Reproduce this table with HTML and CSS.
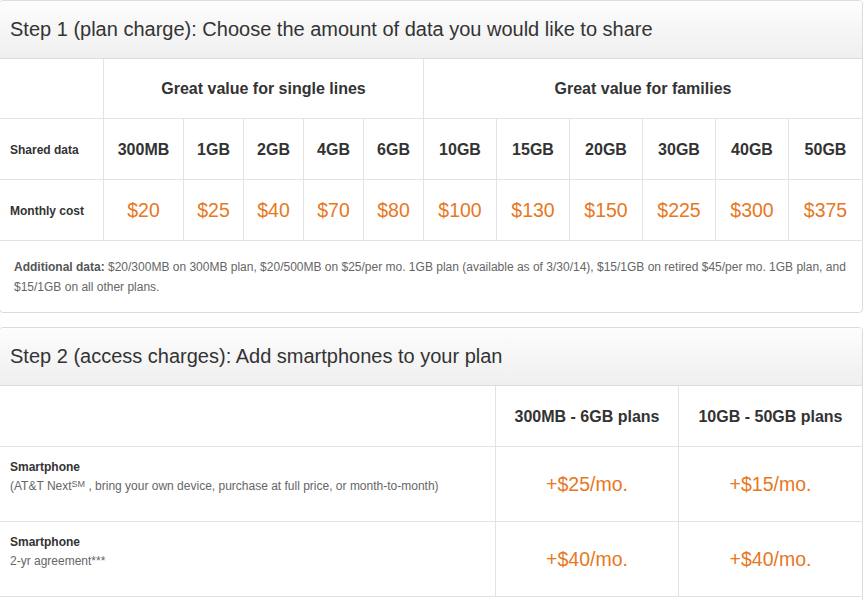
FILE: index.html
```html
<!DOCTYPE html>
<html>
<head>
<meta charset="utf-8">
<link rel="stylesheet" href="styles.css">
</head>
<body>
<div class="page">
  <section class="panel">
    <h2 class="panel-title">Step 1 (plan charge): Choose the amount of data you would like to share</h2>
    <div class="grid plans">
      <div class="cell"></div>
      <div class="cell group single">Great value for single lines</div>
      <div class="cell group family">Great value for families</div>

      <div class="cell label">Shared data</div>
      <div class="cell size">300MB</div>
      <div class="cell size">1GB</div>
      <div class="cell size">2GB</div>
      <div class="cell size">4GB</div>
      <div class="cell size">6GB</div>
      <div class="cell size">10GB</div>
      <div class="cell size">15GB</div>
      <div class="cell size">20GB</div>
      <div class="cell size">30GB</div>
      <div class="cell size">40GB</div>
      <div class="cell size">50GB</div>

      <div class="cell label">Monthly cost</div>
      <div class="cell price">$20</div>
      <div class="cell price">$25</div>
      <div class="cell price">$40</div>
      <div class="cell price">$70</div>
      <div class="cell price">$80</div>
      <div class="cell price">$100</div>
      <div class="cell price">$130</div>
      <div class="cell price">$150</div>
      <div class="cell price">$225</div>
      <div class="cell price">$300</div>
      <div class="cell price">$375</div>
    </div>
    <p class="note"><strong>Additional data:</strong> $20/300MB on 300MB plan, $20/500MB on $25/per mo. 1GB plan (available as of 3/30/14), $15/1GB on retired $45/per mo. 1GB plan, and $15/1GB on all other plans.</p>
  </section>

  <section class="panel">
    <h2 class="panel-title">Step 2 (access charges): Add smartphones to your plan</h2>
    <div class="grid access">
      <div class="cell"></div>
      <div class="cell head">300MB - 6GB plans</div>
      <div class="cell head">10GB - 50GB plans</div>

      <div class="cell device">
        <span class="device-name">Smartphone</span>
        <span class="device-desc">(AT&amp;T Next<sup>SM</sup> , bring your own device, purchase at full price, or month-to-month)</span>
      </div>
      <div class="cell charge">+$25/mo.</div>
      <div class="cell charge">+$15/mo.</div>

      <div class="cell device">
        <span class="device-name">Smartphone</span>
        <span class="device-desc">2-yr agreement***</span>
      </div>
      <div class="cell charge">+$40/mo.</div>
      <div class="cell charge">+$40/mo.</div>
    </div>
    <div class="panel-rest"></div>
  </section>
</div>
</body>
</html>
```

FILE: styles.css
```css
* { box-sizing: border-box; }

html, body {
  margin: 0;
  padding: 0;
  background: #ffffff;
}

body {
  font-family: "Liberation Sans", Arial, sans-serif;
  color: #333333;
  overflow: hidden;
}

.page {
  width: 864px;
  margin-left: -1px;
  display: flex;
  flex-direction: column;
  gap: 14px;
}

.panel {
  border: 1px solid #dcdcdc;
  border-radius: 4px;
  background: #ffffff;
  overflow: hidden;
}

.panel-title {
  margin: 0;
  height: 58px;
  padding: 17px 9px 0 10px;
  font-size: 20px;
  line-height: 22px;
  font-weight: normal;
  color: #333333;
  background: linear-gradient(#fdfdfd, #efefef);
  border-bottom: 1px solid #dcdcdc;
}

.grid {
  display: grid;
  gap: 1px;
  background: #e3e3e3;
  border-bottom: 1px solid #e3e3e3;
}

.plans {
  grid-template-columns: 103px 79px 59px 59px 59px 59px 72px 72px 72px 72px 72px 73px;
  grid-template-rows: 59px 60px 60px;
}

.access {
  grid-template-columns: 495px 182px 183px;
  grid-template-rows: 60px 74px 74px;
}

.cell {
  background: #ffffff;
  display: flex;
  align-items: center;
  justify-content: center;
}

.group {
  font-size: 16px;
  font-weight: bold;
  padding-top: 1px;
}

.single { grid-column: span 5; }
.family { grid-column: span 6; }

.label {
  justify-content: flex-start;
  padding-left: 10px;
  font-size: 12px;
  font-weight: bold;
  padding-top: 1px;
}

.size {
  font-size: 16px;
  font-weight: bold;
  padding-top: 1px;
}

.price {
  font-size: 19.5px;
  color: #e87722;
  padding-top: 1px;
}

.note {
  margin: 0;
  padding: 16px 14px 15px 14px;
  font-size: 12px;
  line-height: 20px;
  color: #666666;
}

.note strong {
  color: #555555;
}

.head {
  font-size: 16px;
  font-weight: bold;
  padding-top: 2px;
}

.device {
  flex-direction: column;
  align-items: flex-start;
  justify-content: flex-start;
  padding: 11px 10px 0 10px;
  line-height: 19px;
}

.device-name {
  font-size: 12px;
  font-weight: bold;
  color: #333333;
}

.device-desc {
  font-size: 12px;
  color: #666666;
}

.device-desc sup {
  font-size: 9px;
  vertical-align: 0;
  position: relative;
  top: -3px;
}

.charge {
  font-size: 19.5px;
  color: #e87722;
  padding-top: 1px;
}

.panel-rest {
  height: 40px;
}
```
